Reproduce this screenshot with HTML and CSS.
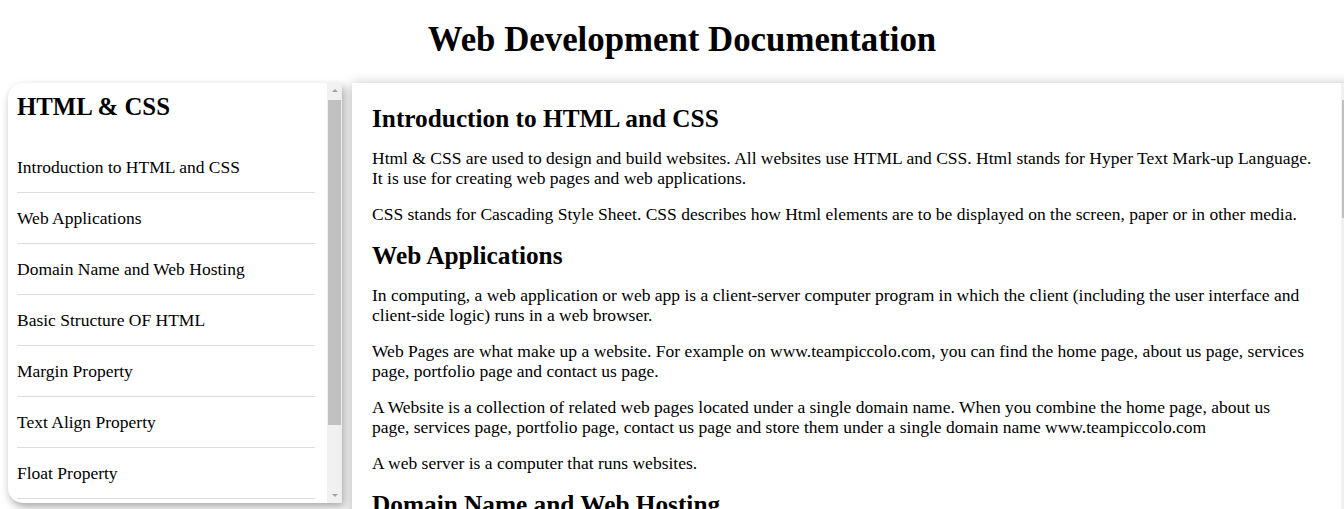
FILE: index.html
```html
<!DOCTYPE html>
<html lang="en">
<head>
<meta charset="utf-8">
<title>Web Development Documentation</title>
<link rel="stylesheet" href="styles.css">
</head>
<body>
<div class="page">
  <header class="header">
    <h1 class="title">Web Development Documentation</h1>
  </header>
  <div class="layout">
    <nav class="sidebar">
      <div class="sidebar-body">
        <h2 class="sidebar-title">HTML &amp; CSS</h2>
        <ul class="nav-list">
          <li class="nav-item">Introduction to HTML and CSS</li>
          <li class="nav-item">Web Applications</li>
          <li class="nav-item">Domain Name and Web Hosting</li>
          <li class="nav-item">Basic Structure OF HTML</li>
          <li class="nav-item">Margin Property</li>
          <li class="nav-item">Text Align Property</li>
          <li class="nav-item">Float Property</li>
          <li class="nav-item">Box Model</li>
        </ul>
      </div>
      <div class="scrollbar">
        <div class="scroll-btn scroll-up"></div>
        <div class="scroll-track"><div class="scroll-thumb sidebar-thumb"></div></div>
        <div class="scroll-btn scroll-down"></div>
      </div>
    </nav>
    <main class="content">
      <div class="content-body">
        <section class="section">
          <h2 class="section-title">Introduction to HTML and CSS</h2>
          <p class="para">Html &amp; CSS are used to design and build websites. All websites use HTML and CSS. Html stands for Hyper Text Mark-up Language.<br>It is use for creating web pages and web applications.</p>
          <p class="para">CSS stands for Cascading Style Sheet. CSS describes how Html elements are to be displayed on the screen, paper or in other media.</p>
        </section>
        <section class="section">
          <h2 class="section-title">Web Applications</h2>
          <p class="para">In computing, a web application or web app is a client-server computer program in which the client (including the user interface and<br>client-side logic) runs in a web browser.</p>
          <p class="para">Web Pages are what make up a website. For example on www.teampiccolo.com, you can find the home page, about us page, services<br>page, portfolio page and contact us page.</p>
          <p class="para">A Website is a collection of related web pages located under a single domain name. When you combine the home page, about us<br>page, services page, portfolio page, contact us page and store them under a single domain name www.teampiccolo.com</p>
          <p class="para">A web server is a computer that runs websites.</p>
        </section>
        <section class="section">
          <h2 class="section-title">Domain Name and Web Hosting</h2>
          <p class="para">A domain name is the address of a website on the internet, for example www.teampiccolo.com. People type the domain name in the browser to visit the website.</p>
          <p class="para">Web hosting is a service that stores the files of a website on a web server, so that the website can be reached by anyone on the internet.</p>
        </section>
      </div>
      <div class="scrollbar">
        <div class="scroll-btn scroll-up"></div>
        <div class="scroll-track"><div class="scroll-thumb content-thumb"></div></div>
        <div class="scroll-btn scroll-down"></div>
      </div>
    </main>
  </div>
</div>
</body>
</html>
```
FILE: styles.css
```css
html {
  overflow: hidden;
}
body {
  margin: 0;
  background: #ffffff;
  color: #000000;
  font-family: "Liberation Serif", "Times New Roman", serif;
}
.page {
  width: 1348px;
  padding: 0 8px;
}
.header {
  padding-top: 20px;
  margin-bottom: 23px;
}
.title {
  margin: 0;
  text-align: center;
  font-size: 34.8px;
  line-height: 40px;
  font-weight: bold;
}
.layout {
  display: flex;
  align-items: flex-start;
  gap: 10px;
}

/* sidebar */
.sidebar {
  flex: none;
  display: flex;
  width: 334px;
  height: 420px;
  overflow: hidden;
  background: #ffffff;
  border-radius: 15px 0 0 15px;
  box-shadow: 2px 4px 9px rgba(0, 0, 0, 0.35);
}
.sidebar-body {
  flex: 1;
  min-width: 0;
  overflow: hidden;
  padding: 10px 12px 0 9px;
}
.sidebar-title {
  margin: 0 0 21px;
  font-size: 24.8px;
  line-height: 28px;
  font-weight: bold;
}
.nav-list {
  margin: 0;
  padding: 0;
  list-style: none;
}
.nav-item {
  padding: 15px 0;
  border-bottom: 1px solid #dddddd;
  font-size: 17.5px;
  line-height: 20px;
}

/* main content */
.content {
  flex: none;
  display: flex;
  width: 1004px;
  height: 450px;
  overflow: hidden;
  background: #ffffff;
  box-shadow: 0 2px 12px rgba(0, 0, 0, 0.3);
}
.content-body {
  flex: 1;
  min-width: 0;
  overflow: hidden;
  padding: 20px 0 0 20px;
}
.section-title {
  margin: 0 0 15px;
  font-size: 25.3px;
  line-height: 30px;
  font-weight: bold;
}
.para {
  margin: 0 0 16px;
  font-size: 17.5px;
  line-height: 20px;
  white-space: nowrap;
}

/* drawn scrollbars */
.scrollbar {
  flex: none;
  display: flex;
  flex-direction: column;
  width: 15px;
  background: #f1f1f1;
}
.scroll-btn {
  flex: none;
  height: 15px;
  display: flex;
  align-items: center;
  justify-content: center;
}
.scroll-up::before {
  content: "";
  border-left: 3px solid transparent;
  border-right: 3px solid transparent;
  border-bottom: 3px solid #a3a3a3;
}
.scroll-down::before {
  content: "";
  border-left: 3px solid transparent;
  border-right: 3px solid transparent;
  border-top: 3px solid #a3a3a3;
}
.scroll-track {
  flex: 1;
  padding: 2px 1px 0 1px;
}
.scroll-thumb {
  background: #c1c1c1;
}
.sidebar-thumb {
  height: 325px;
}
.content-thumb {
  height: 118px;
}
```
